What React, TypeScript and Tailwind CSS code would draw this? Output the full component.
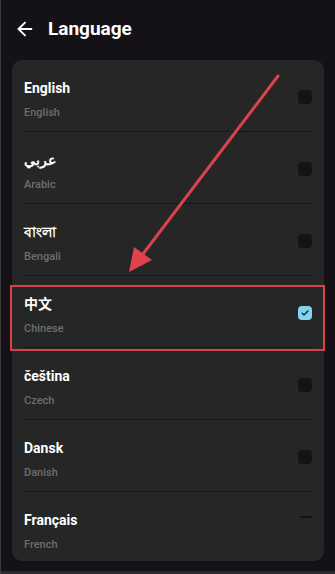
import { ArrowLeft } from "lucide-react";

interface Lang {
	name: string;
	sub: string;
	checked?: boolean;
	cut?: boolean;
}

const langs: Lang[] = [
	{ name: "English", sub: "English" },
	{ name: "عربي", sub: "Arabic" },
	{ name: "বাংলা", sub: "Bengali" },
	{ name: "中文", sub: "Chinese", checked: true },
	{ name: "čeština", sub: "Czech" },
	{ name: "Dansk", sub: "Danish" },
	{ name: "Français", sub: "French", cut: true },
];

function Checkbox({ checked, cut }: { checked?: boolean; cut?: boolean }) {
	if (cut) {
		return <div className="mt-[24px] h-[2px] w-[12px] rounded-full bg-[#121212]" />;
	}
	if (checked) {
		return (
			<div className="mt-[30px] flex h-[14px] w-[14px] items-center justify-center rounded-[4px] bg-[#83d4ef]">
				<svg width="10" height="10" viewBox="0 0 24 24" fill="none" stroke="#17313d" strokeWidth="3.5" strokeLinecap="round" strokeLinejoin="round">
					<path d="M5 12.5l4.5 4.5L19 7.5" />
				</svg>
			</div>
		);
	}
	return <div className="mt-[30px] h-[14px] w-[14px] rounded-[4px] bg-[#141414]" />;
}

export default function App() {
	return (
		<div
			className="relative h-[574px] w-[335px] overflow-hidden border-l border-[#3a3940] bg-[#141217]"
			style={{ fontFamily: 'Roboto, "Noto Sans", "Noto Sans CJK SC", sans-serif' }}
		>
			<div className="flex h-[56px] items-center px-[13px] pt-[2px]">
				<ArrowLeft className="h-[22px] w-[22px] text-white" strokeWidth={2} />
				<h1 className="ml-[12px] font-bold text-[19px] text-white">Language</h1>
			</div>

			<div className="mx-[11px] mt-[4px] h-[501px] overflow-hidden rounded-[10px] bg-[#262626] px-[12px]">
				{langs.map((l, i) => (
					<div
						className={`flex h-[72px] items-start justify-between ${i < langs.length - 1 ? "border-b border-[#171717]" : ""}`}
						key={l.sub}
					>
						<div className="pt-[18px]">
							<div className="font-bold text-[14px] leading-[20px] text-white">{l.name}</div>
							<div className="mt-[7px] font-medium text-[11px] leading-[16px] text-[#6e6e6e]">{l.sub}</div>
						</div>
						<Checkbox checked={l.checked} cut={l.cut} />
					</div>
				))}
			</div>

			<div className="absolute left-[9px] top-[285px] h-[66px] w-[315px] border-2 border-[#d6434d]" />

			<svg className="pointer-events-none absolute left-0 top-0" width="335" height="574">
				<line x1="277" y1="76" x2="142" y2="254" stroke="#d9434c" strokeWidth="3" strokeLinecap="round" />
				<polygon points="128,272 151,260 133,247" fill="#e0434c" />
			</svg>

			<div className="absolute bottom-0 left-0 h-[3px] w-full bg-[#2c2b30]" />
		</div>
	);
}
